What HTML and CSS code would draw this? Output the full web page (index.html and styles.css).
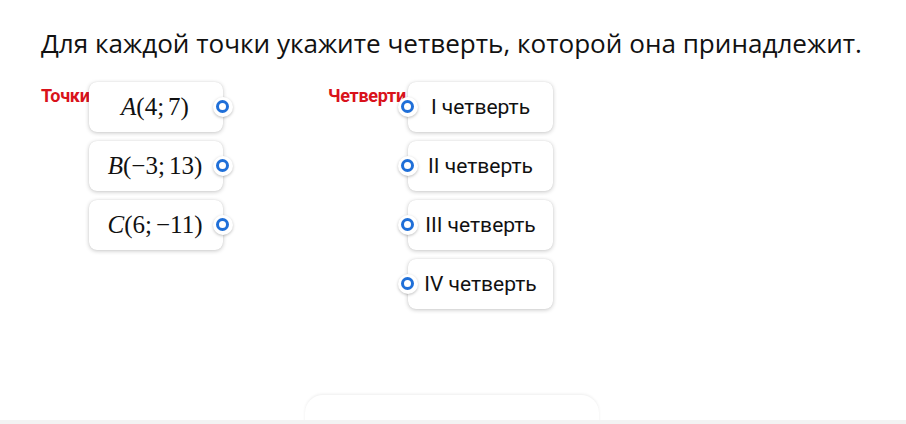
FILE: index.html
```html
<!DOCTYPE html>
<html lang="ru">
<head>
  <meta charset="UTF-8" />
  <meta name="viewport" content="width=device-width, initial-scale=1" />
  <title>Четверти координатной плоскости</title>
  <link rel="stylesheet" href="styles.css">
</head>
<body>
  <div class="pagina">
    <h1 class="enunciado">Для каждой точки укажите четверть, которой она принадлежит.</h1>

    <div class="emparejar">
      <!-- Columna izquierda: puntos -->
      <div class="grupo grupo-puntos">
        <div class="etiqueta">Точки</div>
        <div class="lista">
          <div class="tarjeta">
            <span class="formula"><i>A</i>(4;<span class="sp"></span>7)</span>
            <span class="punto punto-der"></span>
          </div>
          <div class="tarjeta">
            <span class="formula"><i>B</i>(−3;<span class="sp"></span>13)</span>
            <span class="punto punto-der"></span>
          </div>
          <div class="tarjeta">
            <span class="formula"><i>C</i>(6;<span class="sp"></span>−11)</span>
            <span class="punto punto-der"></span>
          </div>
        </div>
      </div>

      <!-- Columna derecha: cuartos -->
      <div class="grupo grupo-cuartos">
        <div class="etiqueta">Четверти</div>
        <div class="lista">
          <div class="tarjeta">
            <span class="punto punto-izq"></span>
            <span class="texto">I четверть</span>
          </div>
          <div class="tarjeta">
            <span class="punto punto-izq"></span>
            <span class="texto">II четверть</span>
          </div>
          <div class="tarjeta">
            <span class="punto punto-izq"></span>
            <span class="texto">III четверть</span>
          </div>
          <div class="tarjeta">
            <span class="punto punto-izq"></span>
            <span class="texto">IV четверть</span>
          </div>
        </div>
      </div>
    </div>

    <div class="btn-siguiente"></div>
  </div>
</body>
</html>
```

FILE: styles.css
```css
html, body {
  margin: 0;
  height: 100%;
  overflow: hidden;
}

body {
  background: #f3f3f3;
  font-family: 'Open Sans', 'Noto Sans', sans-serif;
  color: #111;
}

.pagina {
  height: 420px;
  overflow: hidden;
  background: #fff;
  padding: 24px 0 0 41px;
  box-sizing: border-box;
}

.enunciado {
  margin: 0;
  font-size: 26.1px;
  font-weight: 400;
  line-height: 38px;
  color: #111;
}

.emparejar {
  display: flex;
  margin-top: 20px;
}

.grupo {
  display: flex;
  align-items: flex-start;
}

.grupo-cuartos {
  margin-left: 105px;
}

.etiqueta {
  font-family: Roboto, 'Liberation Sans', sans-serif;
  font-weight: 700;
  font-size: 18px;
  letter-spacing: -0.3px;
  color: #d9121b;
  padding-top: 3px;
  white-space: nowrap;
}

.grupo-puntos .etiqueta {
  width: 48px;
}

.grupo-cuartos .etiqueta {
  width: 80px;
}

.lista {
  display: flex;
  flex-direction: column;
  gap: 9px;
}

.grupo-puntos .lista {
  width: 134px;
}

.grupo-cuartos .lista {
  width: 145px;
}

.tarjeta {
  position: relative;
  height: 50px;
  display: flex;
  align-items: center;
  justify-content: center;
  background: #fff;
  border-radius: 8px;
  box-shadow: 0 1px 4px rgb(0 0 0 / 0.22), 0 0 1px rgb(0 0 0 / 0.12);
}

.formula {
  font-family: 'Liberation Serif', 'DejaVu Serif', serif;
  font-size: 25px;
  white-space: nowrap;
  color: #111;
  margin-left: -2px;
}

.formula .sp {
  display: inline-block;
  width: 4px;
}

.texto {
  font-family: Roboto, 'Liberation Sans', sans-serif;
  font-size: 21px;
  color: #111;
  white-space: nowrap;
}

/* puntos de conexion sobre el borde de la tarjeta */
.punto {
  position: absolute;
  top: 50%;
  width: 20px;
  height: 20px;
  margin-top: -10px;
  border-radius: 50%;
  background: #fff;
  box-shadow: 0 1px 3px rgb(0 0 0 / 0.25);
  z-index: 2;
}

.punto::after {
  content: "";
  position: absolute;
  left: 3px;
  top: 3px;
  width: 7px;
  height: 7px;
  border-radius: 50%;
  border: 3.5px solid #1f6fd8;
  background: #fff;
}

.punto-der {
  right: -10px;
}

.punto-izq {
  left: -10px;
}

.btn-siguiente {
  width: 294px;
  height: 44px;
  margin: 86px 0 0 264px;
  border-radius: 18px;
  background: #fff;
  box-shadow: 0 -1px 3px rgb(0 0 0 / 0.07);
}
```
